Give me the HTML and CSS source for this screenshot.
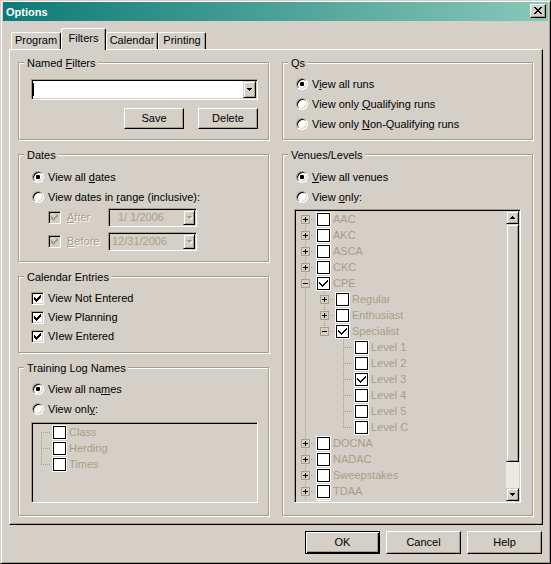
FILE: index.html
```html
<!DOCTYPE html>
<html lang="en">
<head>
<meta charset="utf-8">
<title>Options</title>
<link rel="stylesheet" href="styles.css">
</head>
<body>
<svg class="defs" xmlns="http://www.w3.org/2000/svg">
  <symbol id="chk" viewBox="0 0 7 7"><path d="M0 2H1V3H2V4H3V3H4V2H5V1H6V0H7V3H6V4H5V5H4V6H3V7H2V6H1V5H0Z"/></symbol>
  <symbol id="tchk" viewBox="0 0 9 7"><path d="M0 2H1V3H2V4H3V5H4V4H5V3H6V2H7V1H8V0H9V2H8V3H7V4H6V5H5V6H4V7H3V6H2V5H1V4H0Z"/></symbol>
  <symbol id="adown" viewBox="0 0 5 3"><path d="M0 0H5V1H4V2H3V3H2V2H1V1H0Z"/></symbol>
  <symbol id="aup" viewBox="0 0 5 3"><path d="M2 0H3V1H4V2H5V3H0V2H1V1H2Z"/></symbol>
  <symbol id="plus" viewBox="0 0 9 9"><rect x="0.5" y="0.5" width="8" height="8" fill="#d4d0c8" stroke="#aa9d86"/><path d="M2 4H7V5H2Z M4 2H5V7H4Z" fill="#000"/></symbol>
  <symbol id="minus" viewBox="0 0 9 9"><rect x="0.5" y="0.5" width="8" height="8" fill="#d4d0c8" stroke="#aa9d86"/><path d="M2 4H7V5H2Z" fill="#000"/></symbol>
</svg>

<div class="window">
  <div class="titlebar">
    <span class="title">Options</span>
    <span class="close"><svg class="ic-x" viewBox="0 0 8 7"><path d="M0 0h2v1h-2z M6 0h2v1h-2z M1 1h2v1h-2z M5 1h2v1h-2z M2 2h4v1h-4z M3 3h2v1h-2z M2 4h4v1h-4z M1 5h2v1h-2z M5 5h2v1h-2z M0 6h2v1h-2z M6 6h2v1h-2z"/></svg></span>
  </div>

  <div class="tabs">
    <div class="tab t-program">Program</div>
    <div class="tab sel t-filters">Filters</div>
    <div class="tab t-calendar">Calendar</div>
    <div class="tab t-printing">Printing</div>
  </div>

  <div class="sheet">
    <div class="col">
      <div class="group g-named">
        <div class="legend">Named <u>F</u>ilters</div>
        <div class="combo sunken">
          <span class="caret"></span>
          <span class="dropbtn"><svg class="arrow"><use href="#adown"/></svg></span>
        </div>
        <div class="btnrow">
          <button class="btn small">Save</button>
          <button class="btn small">Delete</button>
        </div>
      </div>

      <div class="group g-dates">
        <div class="legend">Dates</div>
        <div class="opt first"><span class="radio on"></span><span>View all <u>d</u>ates</span></div>
        <div class="opt"><span class="radio"></span><span>View dates in <u>r</u>ange (inclusive):</span></div>
        <div class="daterow d1">
          <span class="dlabel"><span class="check dis"><svg class="ck"><use href="#chk"/></svg></span><span class="distext"><u>A</u>fter</span></span>
          <div class="datebox sunken"><span class="dval indent">1/ 1/2006</span><span class="dropbtn dis"><svg class="arrow"><use href="#adown"/></svg></span></div>
        </div>
        <div class="daterow d2">
          <span class="dlabel"><span class="check dis"><svg class="ck"><use href="#chk"/></svg></span><span class="distext"><u>B</u>efore</span></span>
          <div class="datebox sunken"><span class="dval">12/31/2006</span><span class="dropbtn dis"><svg class="arrow"><use href="#adown"/></svg></span></div>
        </div>
      </div>

      <div class="group g-cal">
        <div class="legend">Calendar Entries</div>
        <div class="copt first"><span class="check"><svg class="ck"><use href="#chk"/></svg></span><span>View Not Entered</span></div>
        <div class="copt"><span class="check"><svg class="ck"><use href="#chk"/></svg></span><span>View Planning</span></div>
        <div class="copt"><span class="check"><svg class="ck"><use href="#chk"/></svg></span><span>VIew Entered</span></div>
      </div>

      <div class="group g-train">
        <div class="legend">Training Log Names</div>
        <div class="opt first"><span class="radio on"></span><span>View all na<u>m</u>es</span></div>
        <div class="opt"><span class="radio"></span><span>View onl<u>y</u>:</span></div>
        <div class="tree tree-names sunken">
          <div class="rows shift">
            <div class="row"><span class="ind first"></span><span class="tchk"></span><span class="tlabel">Class</span></div>
            <div class="row"><span class="ind tee"></span><span class="tchk"></span><span class="tlabel">Herding</span></div>
            <div class="row"><span class="ind last"></span><span class="tchk"></span><span class="tlabel">Times</span></div>
          </div>
        </div>
      </div>
    </div>

    <div class="col">
      <div class="group g-qs">
        <div class="legend">Qs</div>
        <div class="opt first"><span class="radio on"></span><span>V<u>i</u>ew all runs</span></div>
        <div class="opt"><span class="radio"></span><span>View only <u>Q</u>ualifying runs</span></div>
        <div class="opt"><span class="radio"></span><span>View only <u>N</u>on-Qualifying runs</span></div>
      </div>

      <div class="group g-venues">
        <div class="legend">Venues/Levels</div>
        <div class="opt first"><span class="radio on"></span><span><u>V</u>iew all venues</span></div>
        <div class="opt"><span class="radio"></span><span>View <u>o</u>nly:</span></div>
        <div class="tree tree-venues sunken">
          <div class="rows">
            <div class="row"><span class="ind first"><svg class="exp"><use href="#plus"/></svg></span><span class="tchk"></span><span class="tlabel">AAC</span></div>
            <div class="row"><span class="ind tee"><svg class="exp"><use href="#plus"/></svg></span><span class="tchk"></span><span class="tlabel">AKC</span></div>
            <div class="row"><span class="ind tee"><svg class="exp"><use href="#plus"/></svg></span><span class="tchk"></span><span class="tlabel">ASCA</span></div>
            <div class="row"><span class="ind tee"><svg class="exp"><use href="#plus"/></svg></span><span class="tchk"></span><span class="tlabel">CKC</span></div>
            <div class="row"><span class="ind tee"><svg class="exp"><use href="#minus"/></svg></span><span class="tchk"><svg class="tck"><use href="#tchk"/></svg></span><span class="tlabel">CPE</span></div>
            <div class="row"><span class="ind v"></span><span class="ind tee"><svg class="exp"><use href="#plus"/></svg></span><span class="tchk"></span><span class="tlabel">Regular</span></div>
            <div class="row"><span class="ind v"></span><span class="ind tee"><svg class="exp"><use href="#plus"/></svg></span><span class="tchk"></span><span class="tlabel">Enthusiast</span></div>
            <div class="row"><span class="ind v"></span><span class="ind last"><svg class="exp"><use href="#minus"/></svg></span><span class="tchk"><svg class="tck"><use href="#tchk"/></svg></span><span class="tlabel">Specialist</span></div>
            <div class="row"><span class="ind v"></span><span class="ind"></span><span class="ind tee"></span><span class="tchk"></span><span class="tlabel">Level 1</span></div>
            <div class="row"><span class="ind v"></span><span class="ind"></span><span class="ind tee"></span><span class="tchk"></span><span class="tlabel">Level 2</span></div>
            <div class="row"><span class="ind v"></span><span class="ind"></span><span class="ind tee"></span><span class="tchk"><svg class="tck"><use href="#tchk"/></svg></span><span class="tlabel">Level 3</span></div>
            <div class="row"><span class="ind v"></span><span class="ind"></span><span class="ind tee"></span><span class="tchk"></span><span class="tlabel">Level 4</span></div>
            <div class="row"><span class="ind v"></span><span class="ind"></span><span class="ind tee"></span><span class="tchk"></span><span class="tlabel">Level 5</span></div>
            <div class="row"><span class="ind v"></span><span class="ind"></span><span class="ind last"></span><span class="tchk"></span><span class="tlabel">Level C</span></div>
            <div class="row"><span class="ind tee"><svg class="exp"><use href="#plus"/></svg></span><span class="tchk"></span><span class="tlabel">DOCNA</span></div>
            <div class="row"><span class="ind tee"><svg class="exp"><use href="#plus"/></svg></span><span class="tchk"></span><span class="tlabel">NADAC</span></div>
            <div class="row"><span class="ind tee"><svg class="exp"><use href="#plus"/></svg></span><span class="tchk"></span><span class="tlabel">Sweepstakes</span></div>
            <div class="row"><span class="ind tee"><svg class="exp"><use href="#plus"/></svg></span><span class="tchk"></span><span class="tlabel">TDAA</span></div>
            <div class="row"><span class="ind tee"><svg class="exp"><use href="#plus"/></svg></span><span class="tchk"></span></div>
          </div>
          <div class="vscroll">
            <span class="sbtn"><svg class="arrow"><use href="#aup"/></svg></span>
            <span class="thumb"></span>
            <span class="track"></span>
            <span class="sbtn"><svg class="arrow"><use href="#adown"/></svg></span>
          </div>
        </div>
      </div>
    </div>
  </div>

  <div class="footer">
    <button class="btn big def">OK</button>
    <button class="btn big">Cancel</button>
    <button class="btn big">Help</button>
  </div>
</div>
</body>
</html>
```

FILE: styles.css
```css
* { box-sizing: border-box; }
html, body { margin: 0; padding: 0; }
body {
  width: 551px;
  height: 564px;
  overflow: hidden;
  background: #d4d0c8;
  font: 11px/13px "Liberation Sans", Arial, sans-serif;
  color: #000;
}
.defs { display: none; }
svg { shape-rendering: crispEdges; display: block; }
u { text-decoration: underline; text-underline-offset: 1px; }

/* window frame */
.window {
  width: 551px;
  height: 564px;
  background: #d4d0c8;
  border: 1px solid;
  border-color: #d4d0c8 #000 #000 #d4d0c8;
  box-shadow: inset 1px 1px 0 #fff, inset -1px -1px 0 #aa9d86;
  padding: 1px 2px 2px 2px;
  display: flex;
  flex-direction: column;
}

.titlebar {
  flex: none;
  height: 19px;
  display: flex;
  align-items: flex-start;
  justify-content: space-between;
  background: linear-gradient(90deg, #0e7a77 0%, #4ba197 50%, #88c8b8 100%);
}
.title {
  color: #fff;
  font-weight: bold;
  line-height: 18px;
  padding: 1px 0 0 3px;
}
.close {
  width: 16px;
  height: 14px;
  margin: 2px 2px 0 0;
  background: #d4d0c8;
  border: 1px solid;
  border-color: #fff #000 #000 #fff;
  box-shadow: inset -1px -1px 0 #aa9d86;
  display: flex;
  align-items: center;
  justify-content: center;
  padding: 0 1px 1px 0;
}
.ic-x { width: 8px; height: 7px; fill: #000; }

/* tabs */
.tabs {
  flex: none;
  display: flex;
  align-items: flex-end;
  height: 21px;
  margin: 7px 0 0 8px;
}
.tab {
  flex: none;
  height: 17px;
  background: #d4d0c8;
  border: 1px solid;
  border-bottom: 0;
  border-color: #fff #000 transparent #fff;
  border-radius: 2px 2px 0 0;
  box-shadow: inset -1px 0 0 #aa9d86;
  text-align: center;
  padding-top: 1px;
  line-height: 13px;
}
.tab.sel {
  height: 22px;
  margin-bottom: -1px;
  padding-top: 3px;
  position: relative;
  z-index: 1;
}
.t-program { width: 50px; }
.t-filters { width: 45px; }
.t-calendar { width: 52px; }
.t-printing { width: 48px; }

/* property sheet */
.sheet {
  flex: none;
  width: 534px;
  height: 476px;
  margin-left: 6px;
  border: 1px solid;
  border-color: #fff #000 #000 #fff;
  box-shadow: inset -1px -1px 0 #aa9d86;
  padding: 12px 0 0 8px;
  display: grid;
  grid-template-columns: 251px 251px;
  column-gap: 13px;
  align-items: start;
}
.col {
  display: flex;
  flex-direction: column;
  gap: 14px;
}

/* group boxes */
.group {
  border: 1px solid #aa9d86;
  box-shadow: inset 1px 1px 0 #fff, 1px 1px 0 #fff;
  display: flex;
  flex-direction: column;
  align-items: flex-start;
}
.group > * { flex: none; }
.g-named { height: 78px; }
.g-dates { height: 108px; }
.g-cal { height: 77px; }
.g-train { height: 149px; }
.g-qs { height: 78px; }
.g-venues { height: 362px; }

.legend {
  margin: -6px 0 0 5px;
  padding: 0 2px 0 3px;
  background: #d4d0c8;
  line-height: 13px;
  white-space: nowrap;
}

/* 3D primitives */
.sunken {
  border: 1px solid;
  border-color: #aa9d86 #fff #fff #aa9d86;
  box-shadow: inset 1px 1px 0 #000, inset -1px -1px 0 #d4d0c8;
}
.btn {
  font: inherit;
  color: #000;
  background: #d4d0c8;
  border: 1px solid;
  border-color: #fff #000 #000 #fff;
  box-shadow: inset -1px -1px 0 #aa9d86;
  padding: 0;
  margin: 0;
  line-height: 13px;
  text-align: center;
}
.btn.small { width: 60px; height: 21px; }
.btn.big { width: 75px; height: 23px; }
.btn.def {
  border-color: #000;
  box-shadow: inset 1px 1px 0 #fff, inset -1px -1px 0 #000, inset -2px -2px 0 #aa9d86;
}

/* combo */
.combo {
  width: 227px;
  height: 21px;
  margin: 9px 0 0 12px;
  background: #fff;
  padding: 1px;
  display: flex;
  align-items: center;
}
.caret { width: 1px; height: 13px; background: #000; }
.dropbtn {
  margin-left: auto;
  align-self: stretch;
  width: 13px;
  background: #d4d0c8;
  border: 1px solid;
  border-color: #d4d0c8 #000 #000 #d4d0c8;
  box-shadow: inset 1px 1px 0 #fff, inset -1px -1px 0 #aa9d86;
  display: flex;
  align-items: center;
  justify-content: center;
  fill: #000;
}
.arrow { width: 5px; height: 3px; }
.dropbtn.dis { width: 12px; fill: #aa9d86; }
.dropbtn.dis .arrow { filter: drop-shadow(1px 1px 0 #fff); }

.btnrow {
  align-self: stretch;
  display: flex;
  justify-content: flex-end;
  gap: 14px;
  margin: 8px 10px 0 0;
}

/* radios and checks */
.opt {
  display: flex;
  align-items: center;
  height: 20px;
  padding-left: 13px;
  white-space: nowrap;
}
.g-dates .opt.first, .g-venues .opt.first { margin-top: 5px; }
.g-qs .opt.first, .g-train .opt.first { margin-top: 4px; }

.radio {
  flex: none;
  width: 12px;
  height: 12px;
  margin-right: 4px;
  border-radius: 50%;
  border: 1px solid;
  border-color: #aa9d86 #fff #fff #aa9d86;
  background: #fff;
  box-shadow: inset 1px 1px 0 #000, inset -1px -1px 0 #d4d0c8;
  display: flex;
  align-items: center;
  justify-content: center;
}
.radio.on::after {
  content: "";
  width: 4px;
  height: 4px;
  border-radius: 1px;
  background: #000;
}

.check {
  flex: none;
  width: 13px;
  height: 13px;
  border: 1px solid;
  border-color: #aa9d86 #fff #fff #aa9d86;
  background: #fff;
  box-shadow: inset 1px 1px 0 #000, inset -1px -1px 0 #d4d0c8;
  padding: 2px 0 0 2px;
  fill: #000;
}
.check.dis { background: #d4d0c8; fill: #aa9d86; }
.ck { width: 7px; height: 7px; }

.copt {
  display: flex;
  align-items: center;
  height: 19px;
  padding-left: 12px;
  white-space: nowrap;
}
.copt .check { margin-right: 4px; }
.copt.first { margin-top: 5px; }

/* date rows */
.daterow {
  display: flex;
  align-items: center;
  height: 19px;
  padding-left: 29px;
}
.daterow.d1 { margin-top: 1px; }
.daterow.d2 { margin-top: 5px; }
.dlabel {
  width: 60px;
  display: flex;
  align-items: center;
}
.distext {
  margin-left: 6px;
  color: #aa9d86;
  text-shadow: 1px 1px 0 #fff;
}
.datebox {
  width: 89px;
  height: 19px;
  background: #d4d0c8;
  padding: 1px;
  display: flex;
  align-items: center;
}
.dval { color: #aa9d86; padding-left: 2px; white-space: pre; }
.dval.indent { padding-left: 8px; }

/* tree views */
.tree {
  width: 227px;
  background: #d4d0c8;
  padding: 1px;
  display: flex;
  overflow: hidden;
}
.tree-names { height: 81px; margin: 3px 0 0 12px; }
.tree-venues { height: 294px; margin: 2px 0 0 11px; }
.rows {
  flex: 1;
  min-width: 0;
  overflow: hidden;
  display: flex;
  flex-direction: column;
}
.rows.shift { margin-left: -1px; }
.row {
  flex: none;
  display: flex;
  align-items: flex-start;
  height: 16px;
}
.ind {
  flex: none;
  width: 19px;
  height: 16px;
  position: relative;
}
.ind::before, .ind::after { content: ""; position: absolute; }
.ind.v::before, .ind.tee::before, .ind.first::before, .ind.last::before {
  left: 9px;
  width: 1px;
  background: repeating-linear-gradient(to bottom, #aa9d86 0 1px, transparent 1px 2px);
}
.ind.v::before, .ind.tee::before { top: 0; height: 16px; }
.ind.first::before { top: 8px; height: 8px; }
.ind.last::before { top: 0; height: 9px; }
.ind.tee::after, .ind.first::after, .ind.last::after {
  left: 11px;
  top: 8px;
  width: 8px;
  height: 1px;
  background: repeating-linear-gradient(to right, #aa9d86 0 1px, transparent 1px 2px);
}
.exp {
  position: absolute;
  left: 5px;
  top: 4px;
  width: 9px;
  height: 9px;
  z-index: 1;
}
.tchk {
  flex: none;
  width: 15px;
  height: 15px;
  margin: 1px 0 0 1px;
  border: 1px solid #fff;
  background: #fff;
  box-shadow: inset 0 0 0 1px #000;
  fill: #000;
}
.tck { width: 9px; height: 7px; margin: 3px 0 0 2px; }
.tlabel {
  margin-left: 2px;
  color: #aa9d86;
  line-height: 16px;
  white-space: nowrap;
}

/* scrollbar */
.vscroll {
  flex: none;
  width: 13px;
  display: flex;
  flex-direction: column;
  background: #ece9e3;
}
.sbtn, .thumb {
  flex: none;
  background: #d4d0c8;
  border: 1px solid;
  border-color: #d4d0c8 #000 #000 #d4d0c8;
  box-shadow: inset 1px 1px 0 #fff, inset -1px -1px 0 #aa9d86;
}
.sbtn {
  height: 13px;
  display: flex;
  align-items: center;
  justify-content: center;
  fill: #000;
}
.thumb { height: 238px; }
.track { flex: 1; }

/* dialog buttons */
.footer {
  flex: none;
  display: flex;
  justify-content: flex-end;
  gap: 6px;
  margin: 6px 6px 0 0;
}
```
